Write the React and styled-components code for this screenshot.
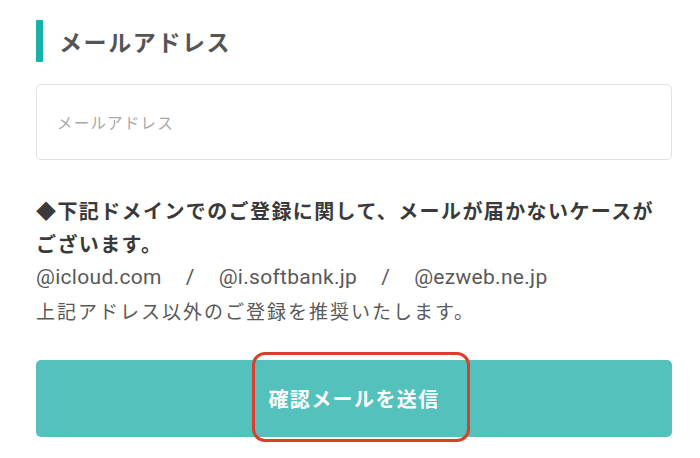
import React from 'react';
import styled, { createGlobalStyle } from 'styled-components';

const GlobalStyle = createGlobalStyle`
  html, body {
    margin: 0;
    padding: 0;
    background: #ffffff;
  }
  body {
    font-family: "Noto Sans CJK JP", "Noto Sans", sans-serif;
  }
`;

const Page = styled.div`
  width: 700px;
  height: 458px;
  box-sizing: border-box;
  padding: 20px 28px 0 36px;
  overflow: hidden;
`;

const Heading = styled.h2`
  margin: 0;
  display: flex;
  align-items: center;
  gap: 16px;
  height: 42px;
  font-size: 23px;
  font-weight: 700;
  color: #555555;
  letter-spacing: 1.6px;

  &::before {
    content: '';
    width: 7px;
    height: 42px;
    background: #16b2a8;
    border-radius: 1px;
  }
`;

const Input = styled.input`
  display: block;
  box-sizing: border-box;
  width: 100%;
  height: 76px;
  margin-top: 22px;
  padding: 0 20px;
  border: 1.5px solid #e2e2e2;
  border-radius: 5px;
  font-family: inherit;
  font-size: 15.5px;
  letter-spacing: 1.2px;
  color: #333;
  outline: none;

  &::placeholder {
    color: #a8a8a8;
  }
`;

const Notice = styled.div`
  margin-top: 34px;
  color: #595959;
`;

const Lead = styled.p`
  margin: 0;
  font-size: 20px;
  font-weight: 700;
  line-height: 33px;
  letter-spacing: 1.4px;
  color: #3a3a3a;
`;

const Domains = styled.p`
  display: flex;
  align-items: baseline;
  margin: 0;
  font-family: Roboto, "Noto Sans CJK JP", sans-serif;
  font-size: 21px;
  line-height: 34px;
  letter-spacing: 0.3px;
`;

const Slash = styled.span`
  margin: 0 24px;
`;

const Body = styled.p`
  margin: 0;
  font-size: 19px;
  line-height: 34px;
  letter-spacing: 2px;
`;

const ButtonWrap = styled.div`
  position: relative;
  margin-top: 32px;
`;

const SubmitButton = styled.button`
  display: flex;
  align-items: center;
  justify-content: center;
  width: 100%;
  height: 77px;
  border: none;
  border-radius: 5px;
  background: #55c1bc;
  color: #ffffff;
  font-family: inherit;
  font-size: 20px;
  font-weight: 700;
  letter-spacing: 1.4px;
  cursor: pointer;
`;

const Highlight = styled.span`
  position: absolute;
  left: 216px;
  top: -8px;
  width: 218px;
  height: 90px;
  box-sizing: border-box;
  border: 3px solid #d8402a;
  border-radius: 13px;
  pointer-events: none;
`;

const domains = ['@icloud.com', '@i.softbank.jp', '@ezweb.ne.jp'];

export default function App() {
  return (
    <>
      <GlobalStyle />
      <Page>
        <Heading>メールアドレス</Heading>
        <Input type="email" placeholder="メールアドレス" />
        <Notice>
          <Lead>◆下記ドメインでのご登録に関して、メールが届かないケースがございます。</Lead>
          <Domains>
            {domains.map((d, i) => (
              <React.Fragment key={d}>
                {i > 0 && <Slash>/</Slash>}
                <span>{d}</span>
              </React.Fragment>
            ))}
          </Domains>
          <Body>上記アドレス以外のご登録を推奨いたします。</Body>
        </Notice>
        <ButtonWrap>
          <SubmitButton type="button">確認メールを送信</SubmitButton>
          <Highlight />
        </ButtonWrap>
      </Page>
    </>
  );
}
